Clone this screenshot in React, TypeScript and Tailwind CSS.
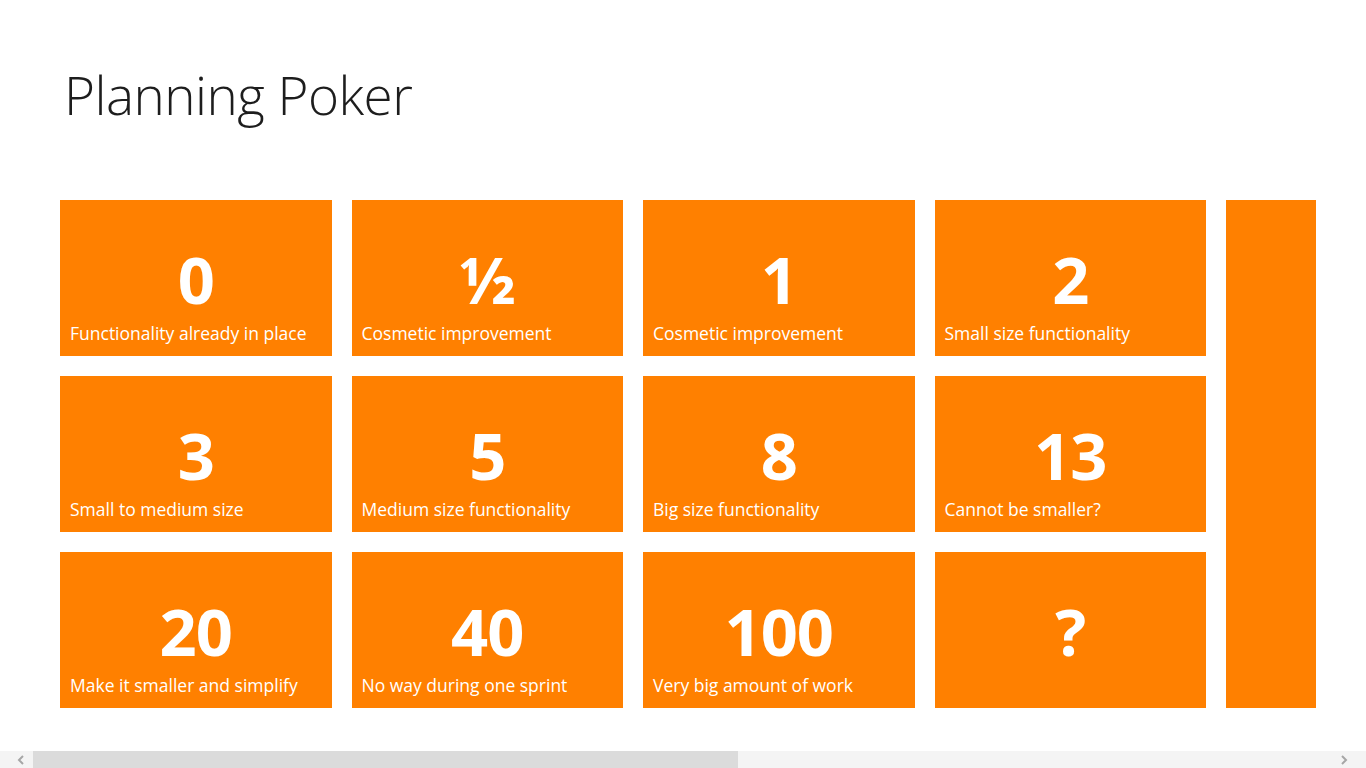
const cards = [
  { value: '0', label: 'Functionality already in place' },
  { value: '½', label: 'Cosmetic improvement' },
  { value: '1', label: 'Cosmetic improvement' },
  { value: '2', label: 'Small size functionality' },
  { value: '3', label: 'Small to medium size' },
  { value: '5', label: 'Medium size functionality' },
  { value: '8', label: 'Big size functionality' },
  { value: '13', label: 'Cannot be smaller?' },
  { value: '20', label: 'Make it smaller and simplify' },
  { value: '40', label: 'No way during one sprint' },
  { value: '100', label: 'Very big amount of work' },
  { value: '?', label: '' },
]

function Card({ value, label }: { value: string; label: string }) {
  return (
    <div className="bg-[#ff8000] text-white flex flex-col h-[156px] px-[10px]">
      <div className="flex-1 flex items-center justify-center pt-[36px]">
        <span className="font-bold text-[65px] leading-none tracking-[-0.015em]">{value}</span>
      </div>
      <div className="h-[34px] text-[17.5px] leading-[22px] whitespace-nowrap">{label}</div>
    </div>
  )
}

export default function App() {
  return (
    <div className="h-screen w-full bg-white flex flex-col overflow-hidden font-['Open_Sans','Noto_Sans',sans-serif]">
      {/* Title */}
      <div className="h-[200px] pl-[64px] pt-[68px]">
        <h1 className="text-[53px] font-light leading-none text-[#1d1d1d] tracking-[-0.01em]">Planning Poker</h1>
      </div>

      {/* Tiles */}
      <div className="flex-1 flex gap-[20px] pl-[60px]">
        <div className="grid grid-cols-[repeat(4,271.5px)] gap-[20px] content-start">
          {cards.map((c, i) => (
            <Card key={i} value={c.value} label={c.label} />
          ))}
        </div>
        <div className="w-[90px] h-[508px] bg-[#ff8000]" />
      </div>

      {/* Horizontal scrollbar */}
      <div className="h-[17px] flex bg-[#f4f4f4] items-stretch">
        <div className="w-[33px] flex items-center justify-center pl-[8px]">
          <svg width="8" height="10" viewBox="0 0 8 10" fill="none">
            <path d="M6 1L2 5l4 4" stroke="#a6a6a6" strokeWidth="2" />
          </svg>
        </div>
        <div className="w-[705px] bg-[#dbdbdb]" />
        <div className="flex-1" />
        <div className="w-[44px] flex items-center justify-center">
          <svg width="8" height="10" viewBox="0 0 8 10" fill="none">
            <path d="M2 1l4 4-4 4" stroke="#a6a6a6" strokeWidth="2" />
          </svg>
        </div>
      </div>
    </div>
  )
}
